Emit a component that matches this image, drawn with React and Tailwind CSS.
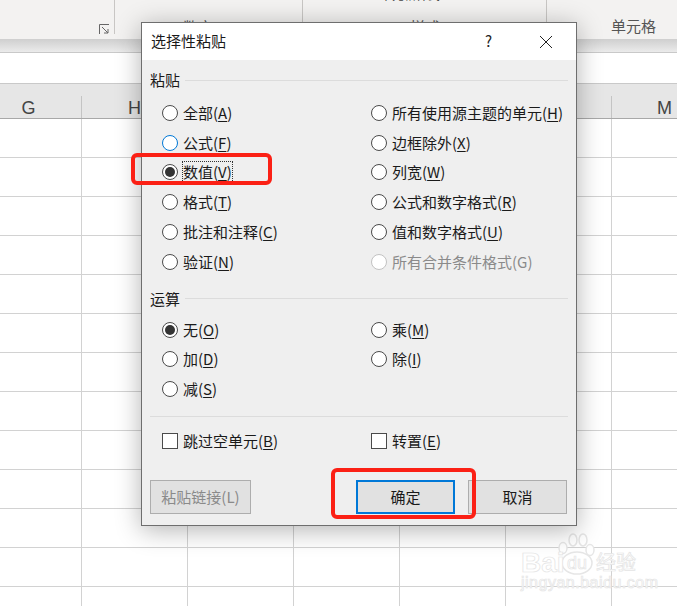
const FONT = "font-['Noto_Sans_CJK_SC','Noto_Sans',sans-serif]";

const COLS = ["G", "H", "I", "J", "K", "L", "M"];

const Radio = ({ checked, focused, disabled }) => (
  <span
    className={`flex size-4 shrink-0 items-center justify-center rounded-full border bg-white ${
      focused ? "border-[#0078d7]" : disabled ? "border-[#c2c2c2]" : "border-[#4a4a4a]"
    } ${disabled ? "bg-[#f0f0f0]" : ""}`}
  >
    {checked && <span className="size-[10px] rounded-full bg-[#333333]" />}
  </span>
);

const Option = ({ cjk, hot, checked, focused, dotted, disabled }) => (
  <div className="flex h-[29.8px] items-center gap-[5px]">
    <Radio checked={checked} focused={focused} disabled={disabled} />
    <span
      className={`text-[15px] leading-[20px] whitespace-nowrap ${
        disabled ? "text-[#8a8a8a]" : "text-[#1a1a1a]"
      } ${dotted ? "outline outline-1 outline-dotted outline-[#333333]" : ""}`}
    >
      {cjk}(<span className={disabled ? "" : "underline underline-offset-2"}>{hot}</span>)
    </span>
  </div>
);

const Check = ({ cjk, hot }) => (
  <div className="flex items-center gap-[5px]">
    <span className="size-4 shrink-0 border border-[#4a4a4a] bg-white" />
    <span className="text-[15px] leading-[20px] text-[#1a1a1a] whitespace-nowrap">
      {cjk}(<span className="underline underline-offset-2">{hot}</span>)
    </span>
  </div>
);

const SectionTitle = ({ children }) => (
  <div className="flex items-center gap-[5px]">
    <span className="text-[15px] leading-[20px] text-[#1a1a1a]">{children}</span>
    <span className="h-px flex-1 bg-[#dcdcdc]" />
  </div>
);

const Dialog = () => (
  <div className="absolute left-[141px] top-[22px] z-10 flex h-[504px] w-[436px] flex-col border border-[#6e6e6e] bg-[#efefef] shadow-[0_4px_24px_rgba(0,0,0,0.3)]">
    <div className="flex h-[37px] shrink-0 items-center bg-white pl-[9px]">
      <span className="text-[15px] text-[#1a1a1a]">选择性粘贴</span>
      <span className="ml-[259px] text-[15px] text-[#222222]">?</span>
      <svg width="14" height="14" viewBox="0 0 14 14" className="ml-[47px]">
        <path d="M1 1L13 13M13 1L1 13" stroke="#222222" strokeWidth="1" fill="none" />
      </svg>
    </div>
    <div className="flex flex-1 flex-col pl-[8px] pr-[8px] pt-[10px]">
      <SectionTitle>粘贴</SectionTitle>
      <div className="mt-[8px] grid grid-cols-[209px_1fr] pl-[12px]">
        <div>
          <Option cjk="全部" hot="A" />
          <Option cjk="公式" hot="F" focused />
          <Option cjk="数值" hot="V" checked dotted />
          <Option cjk="格式" hot="T" />
          <Option cjk="批注和注释" hot="C" />
          <Option cjk="验证" hot="N" />
        </div>
        <div>
          <Option cjk="所有使用源主题的单元" hot="H" />
          <Option cjk="边框除外" hot="X" />
          <Option cjk="列宽" hot="W" />
          <Option cjk="公式和数字格式" hot="R" />
          <Option cjk="值和数字格式" hot="U" />
          <Option cjk="所有合并条件格式" hot="G" disabled />
        </div>
      </div>
      <div className="mt-[12px]">
        <SectionTitle>运算</SectionTitle>
      </div>
      <div className="mt-[6px] grid grid-cols-[209px_1fr] pl-[12px]">
        <div>
          <Option cjk="无" hot="O" checked />
          <Option cjk="加" hot="D" />
          <Option cjk="减" hot="S" />
        </div>
        <div>
          <Option cjk="乘" hot="M" />
          <Option cjk="除" hot="I" />
        </div>
      </div>
      <div className="mt-[12px] h-px bg-[#dcdcdc]" />
      <div className="mt-[14px] grid grid-cols-[209px_1fr] pl-[12px]">
        <Check cjk="跳过空单元" hot="B" />
        <Check cjk="转置" hot="E" />
      </div>
      <div className="mt-[29px] flex items-center">
        <button className="h-[34px] w-[101px] border border-[#adadad] bg-[#e1e1e1] text-[15px] text-[#8a8a8a]">
          粘贴链接(L)
        </button>
        <button className="ml-[105px] h-[34px] w-[99px] border-2 border-[#0078d7] bg-[#e1e1e1] text-[15px] text-[#1a1a1a]">
          确定
        </button>
        <button className="ml-[13px] h-[34px] w-[99px] border border-[#adadad] bg-[#e1e1e1] text-[15px] text-[#1a1a1a]">
          取消
        </button>
      </div>
    </div>
  </div>
);

const Sheet = () => (
  <>
    <div className="h-[39px] bg-[#f3f2f1] flex">
      <div className="relative w-[115px] h-[34px] border-r border-[#c8c6c4]">
        <svg width="11" height="11" viewBox="0 0 11 11" className="absolute right-[4px] top-[24px]">
          <path d="M0.5 10V0.5H10M3 3L9 9M9 5V9H5" stroke="#666666" fill="none" />
        </svg>
      </div>
      <div className="w-[188px] h-[34px] border-r border-[#c8c6c4] pl-[68px] pt-[17px]">
        <span className="block text-[15px] leading-[20px] text-[#555555]">数字</span>
      </div>
      <div className="w-[244px] h-[34px] border-r border-[#c8c6c4]">
        <span className="block -mt-[13px] pl-[77px] text-[12px] leading-[16px] text-[#444444] whitespace-nowrap">单元格样式</span>
        <span className="block mt-[14px] pl-[107px] text-[15px] leading-[20px] text-[#555555]">样式</span>
      </div>
      <div className="flex-1 pl-[64px] pt-[16px]">
        <span className="block text-[15px] leading-[20px] text-[#555555] whitespace-nowrap">单元格</span>
      </div>
    </div>
    <div className="h-[14px] bg-gradient-to-b from-[#cfcfcf] to-[#ebebeb] border-b border-[#c9c9c9]" />
    <div className="h-[31px] bg-white border-b border-[#c9c9c9]" />
    <div className="flex h-[35px] -ml-[24px] bg-[#e6e6e6] border-b border-[#a8a8a8]">
      {COLS.map((c) => (
        <div key={c} className="flex w-[106px] shrink-0 items-end">
          <span className="flex-1 text-center text-[18px] leading-[19px] text-[#444444] font-['Liberation_Sans',sans-serif]">
            {c}
          </span>
          <span className="h-[22px] w-px bg-[#c4c4c4]" />
        </div>
      ))}
    </div>
    <div className="-ml-[24px] grid grid-cols-[repeat(7,106px)] auto-rows-[39px]">
      {Array.from({ length: 91 }).map((_, i) => (
        <div key={i} className="border-r border-b border-[#d2d2d2]" />
      ))}
    </div>
  </>
);

const Watermark = () => (
  <div className="absolute left-[521px] top-[533px] z-0 h-[58px] w-[120px] select-none font-['Liberation_Sans',sans-serif] text-white [-webkit-text-stroke:0.7px_#e4e4e4]">
    <svg width="46" height="44" viewBox="0 0 46 44" className="absolute left-[34px] top-0">
      <g fill="#ffffff" stroke="#e6e6e6" strokeWidth="1.5">
        <ellipse cx="8" cy="15" rx="4" ry="5.5" />
        <ellipse cx="18" cy="7" rx="4" ry="6" />
        <ellipse cx="28" cy="7" rx="4" ry="6" />
        <ellipse cx="35" cy="17" rx="4" ry="5.5" />
        <ellipse cx="22" cy="30" rx="15" ry="11" />
      </g>
    </svg>
    <span className="absolute left-0 top-[14px] text-[28px] leading-[32px] font-bold">Bai</span>
    <span className="absolute left-[46px] top-[19px] text-[18px] leading-[22px]">du</span>
    <span className={`absolute left-[75px] top-[16px] text-[20px] leading-[26px] ${FONT}`}>经验</span>
    <span className="absolute left-0 top-[41px] text-[16px] leading-[18px] tracking-[0.5px] whitespace-nowrap">jingyan.baidu.com</span>
  </div>
);

export default function App() {
  return (
    <div className={`relative h-[606px] w-[677px] overflow-hidden bg-white ${FONT}`}>
      <Sheet />
      <Watermark />
      <Dialog />
      {/* Red highlights on top of the dialog */}
      <div className="absolute left-[131px] top-[153px] z-20 h-[32px] w-[141px] rounded-[6px] border-[4px] border-[#fb2015]" />
      <div className="absolute left-[331px] top-[468px] z-20 h-[51px] w-[145px] rounded-[6px] border-[4px] border-[#fb2015]" />
    </div>
  );
}
